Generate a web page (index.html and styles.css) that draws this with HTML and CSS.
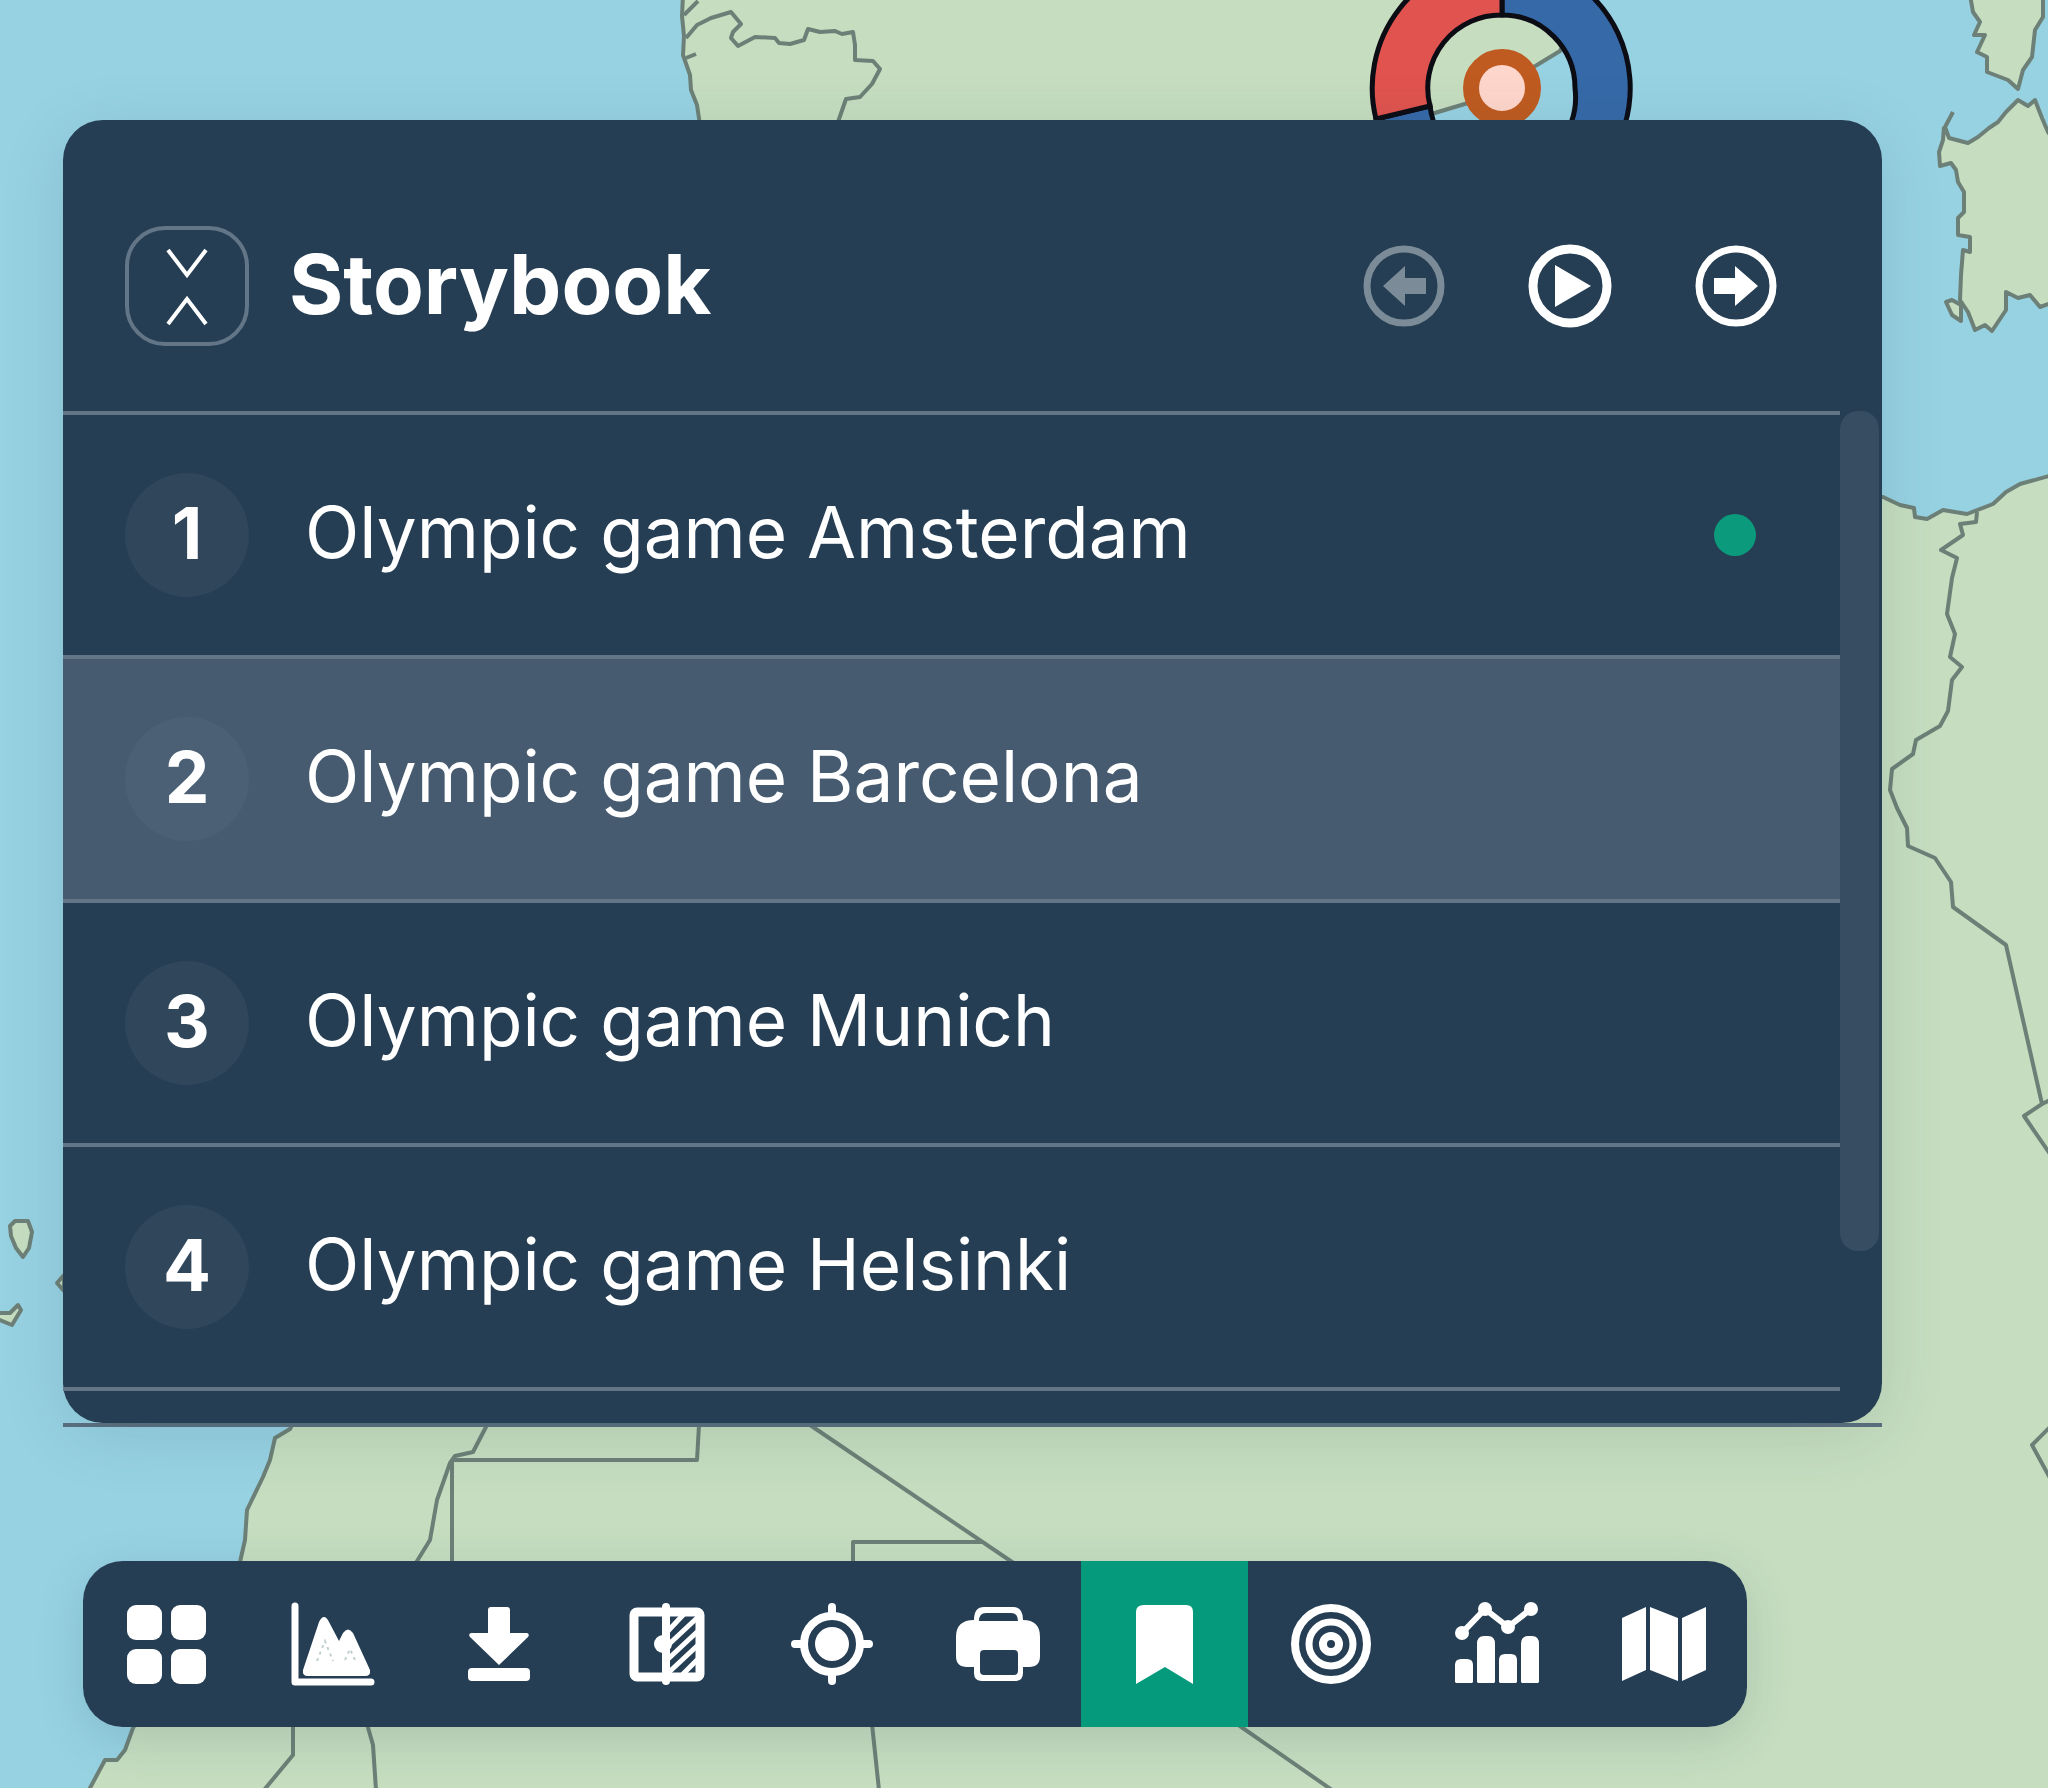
FILE: index.html
```
<!DOCTYPE html>
<html lang="en">
<head>
  <meta charset="UTF-8">
  <meta name="viewport" content="width=device-width, initial-scale=1.0">
  <title>Storybook</title>
  <link rel="stylesheet" href="styles.css">
</head>
<body>
  <!-- Map -->
  <svg class="map" viewBox="0 0 2048 1788" preserveAspectRatio="xMidYMid slice" aria-hidden="true">
    <g class="land">
      <path d="M683 -5 L682 16 L684 36 L683 55 L690 75 L691 90 L697 105 L700 125 L700 300 L1300 300 L1380 130 L1438 112 L1468 103 L1537 65 L1560 51 L1590 -5 Z"/>
      <path d="M1970 -5 L1973 12 L1980 22 L1974 35 L1985 35 L1977 52 L1987 57 L1987 72 L2008 80 L2018 89 L2023 70 L2032 57 L2035 30 L2043 17 L2043 -5 Z"/>
      <path d="M1953 112 L1945 127 L1949 138 L1968 143 L1978 137 L1989 128 L1998 122 L2006 112 L2018 100 L2028 106 L2035 100 L2042 118 L2048 132 L2060 150 L2060 300 L2040 307 L2030 295 L2018 298 L2006 292 L2006 310 L1992 331 L1985 325 L1975 330 L1968 312 L1960 300 L1961 275 L1963 250 L1970 252 L1970 237 L1958 235 L1958 218 L1964 212 L1964 192 L1958 182 L1956 170 L1951 163 L1940 166 L1939 152 L1943 140 L1944 127"/>
      <path d="M1946 302 L1952 300 L1961 305 L1961 321 L1952 315 Z"/>
      <path d="M1800 495 L1883 497 L1900 505 L1914 508 L1915 517 L1927 519 L1943 510 L1967 514 L1993 504 L2006 492 L2020 484 L2060 473 L2060 1800 L85 1800 L90 1788 L105 1760 L117 1760 L125 1750 L133 1728 L240 1562 L245 1540 L247 1510 L263 1477 L270 1460 L275 1438 L290 1429 L330 1350 Z"/>
      <path d="M10 1226 L15 1221 L28 1221 L32 1232 L29 1248 L23 1257 L16 1248 L11 1236 Z"/>
      <path d="M-5 1313 L10 1313 L18 1305 L21 1310 L12 1325 L-5 1318 Z"/>
      <path d="M64 1275 L57 1283 L64 1291 Z"/>
    </g>
    <g class="borders">
      <path d="M684 15 L698 1 M686 38 L697 25 L711 18 L731 12 L741 24 L733 32 L731 38 L738 46 L755 37 L775 38 L779 43 L790 44 L804 40 L808 29 L820 32 L835 31 L842 34 L853 32 L855 45 L855 60 L873 61 L880 69 L872 84 L860 97 L846 99 L838 122 M686 58 L696 54"/>
      <path d="M1977 512 L1976 522 L1960 524 L1963 535 L1941 550 L1957 558 L1952 578 L1947 614 L1955 634 L1950 657 L1962 667 L1952 680 L1948 711 L1940 726 L1916 740 L1913 754 L1892 769 L1890 790 L1897 808 L1907 828 L1908 846 L1935 858 L1951 882 L1953 907 L2006 945 L2042 1104 L2050 1100 M2042 1104 L2024 1116 L2050 1154"/>
      <path d="M2050 1427 L2032 1445 L2050 1478"/>
      <path d="M487 1425 L473 1452 L455 1456 L450 1463 L437 1500 L430 1540 L414 1566 M452 1460 V1566 M452 1460 H697 L699 1425"/>
      <path d="M810 1425 L1018 1566 M853 1566 V1542 H983"/>
      <path d="M293 1724 V1755 L264 1790 M367 1724 L373 1745 L376 1790 M872 1724 L879 1790 M1237 1724 L1332 1790"/>
    </g>
    <!-- Pie marker -->
    <g class="pie">
      <path fill="#3669a8" d="M1502 -41 A129 129 0 1 1 1376 119 L1430 106 A73 73 0 0 0 1575 88 A73 73 0 0 0 1502 15 Z"/>
      <path fill="#e1534e" d="M1502 -41 A129 129 0 0 0 1376 119 L1430 106 A73 73 0 0 1 1502 15 Z"/>
      <circle class="dot" cx="1502" cy="88" r="31"/>
    </g>
  </svg>

  <main>
    <section class="storybook-wrap">
      <div class="storybook">
        <header class="storybook-header">
          <button class="collapse-btn" aria-label="Collapse">
            <svg width="48" height="84" viewBox="0 0 48 84"><path d="M5 6 L24 31 L43 6 M5 80 L24 55 L43 80"/></svg>
          </button>
          <h1>Storybook</h1>
          <div class="player">
            <button aria-label="Previous" disabled>
              <svg viewBox="-42 -42 84 84"><circle r="37" stroke-width="7"/><path d="M22 -8 H1 V-20 L-21 0 L1 20 V8 H22 Z"/></svg>
            </button>
            <button aria-label="Play">
              <svg viewBox="-42 -42 84 84"><circle r="37" stroke-width="9"/><path d="M-15 -21 L21 0 L-15 21 Z"/></svg>
            </button>
            <button aria-label="Next">
              <svg viewBox="-42 -42 84 84"><circle r="37" stroke-width="7"/><path d="M-22 -8 H-1 V-20 L22 0 L-1 20 V8 H-22 Z"/></svg>
            </button>
          </div>
        </header>
        <div class="storybook-body">
          <ol class="stories">
            <li><button><span class="number">1</span><span class="name">Olympic game Amsterdam</span><span class="current"></span></button></li>
            <li class="selected"><button><span class="number">2</span><span class="name">Olympic game Barcelona</span></button></li>
            <li><button><span class="number">3</span><span class="name">Olympic game Munich</span></button></li>
            <li><button><span class="number">4</span><span class="name">Olympic game Helsinki</span></button></li>
          </ol>
          <div class="scrollbar"></div>
        </div>
      </div>
    </section>

    <!-- Toolbar -->
    <nav class="toolbar">
      <button aria-label="Dashboard">
        <svg viewBox="0 0 96 96"><rect x="9" y="9" width="35" height="35" rx="9"/><rect x="53" y="9" width="35" height="35" rx="9"/><rect x="9" y="53" width="35" height="35" rx="9"/><rect x="53" y="53" width="35" height="35" rx="9"/></svg>
      </button>
      <button aria-label="Area chart">
        <svg viewBox="0 0 96 96"><path class="line" stroke-width="7" d="M10 10 V86 H86"/><path d="M18 74 L34 26 Q39 16 44 26 L54 45 L58 37 Q63 30 68 37 L85 74 Q86 80 80 80 H23 Q17 80 18 74 Z"/><path d="M32 65 L40 45 L48 65 M60 64 L65 53 L70 64" fill="none" stroke="#c3d0d2" stroke-width="2" stroke-dasharray="3 4"/></svg>
      </button>
      <button aria-label="Download">
        <svg viewBox="0 0 96 96"><path d="M40 11 H56 Q59 11 59 14 V37 H76 Q79 38 77 41 L48 69 L19 41 Q17 38 20 37 H37 V14 Q37 11 40 11 Z"/><rect x="17" y="72" width="62" height="13" rx="4"/></svg>
      </button>
      <button aria-label="Compare">
        <svg viewBox="0 0 96 96"><rect class="line" x="17" y="16" width="66" height="65" rx="3" stroke-width="9"/><path class="line" stroke-width="8" d="M49 11 V85"/><circle cx="46" cy="48" r="9"/><path class="line" stroke-width="5" d="M50 36 L67 18 M50 50 L80 22 M50 64 L80 36 M50 78 L80 50 M66 78 L80 64"/></svg>
      </button>
      <button aria-label="My location">
        <svg viewBox="0 0 96 96"><circle class="line" cx="48" cy="48" r="28" stroke-width="8"/><circle cx="48" cy="48" r="17"/><path class="line" stroke-width="8" d="M48 11 V20 M48 76 V85 M11 48 H20 M76 48 H85"/></svg>
      </button>
      <button aria-label="Print">
        <svg viewBox="0 0 96 96"><path d="M24 24 Q24 11 34 11 H63 Q73 11 73 24 Q90 24 90 41 V60 Q90 71 79 71 H73 V77 Q73 85 65 85 H32 Q24 85 24 77 V71 H17 Q6 71 6 60 V41 Q6 24 24 24 Z"/><path class="hole" d="M29 25 Q29 17 36 17 H61 Q68 17 68 25 Z"/><rect class="hole" x="30" y="54" width="38" height="25" rx="4"/></svg>
      </button>
      <button class="active" aria-label="Bookmarks">
        <svg viewBox="0 0 96 96"><path d="M27 9 H69 Q76 9 76 16 V88 L48 71 L19 88 V16 Q19 9 27 9 Z"/></svg>
      </button>
      <button aria-label="Buffer">
        <svg viewBox="0 0 96 96"><g class="line"><circle cx="48" cy="48" r="36" stroke-width="8"/><circle cx="48" cy="48" r="22" stroke-width="7"/><circle cx="48" cy="48" r="8" stroke-width="8"/></g></svg>
      </button>
      <button aria-label="Statistics">
        <svg viewBox="0 0 96 96"><path class="line" stroke-width="6" d="M13 37 L36 13 L59 31 L82 13"/><circle cx="13" cy="37" r="7"/><circle cx="36" cy="13" r="7"/><circle cx="59" cy="31" r="7"/><circle cx="82" cy="13" r="7"/><path d="M6 86 V69 Q6 63 12 63 H18 Q24 63 24 69 V86 L23 87 H7 Z M28 86 V48 Q28 40 35 40 H39 Q46 40 46 48 V86 L45 87 H29 Z M50 86 V64 Q50 58 56 58 H62 Q68 58 68 64 V86 L67 87 H51 Z M72 86 V48 Q72 40 79 40 H83 Q90 40 90 48 V86 L89 87 H73 Z"/></svg>
      </button>
      <button aria-label="Maps">
        <svg viewBox="0 0 96 96"><path d="M6 22 L30 11 V74 L6 85 Z M34 11 L62 22 V85 L34 74 Z M66 22 L90 11 V74 L66 85 Z"/></svg>
      </button>
    </nav>
  </main>
</body>
</html>
```

FILE: styles.css
```
* {
  box-sizing: border-box;
}
body {
  font-family: Inter, "Liberation Sans", sans-serif;
  background-color: #97d2e3;
  color: white;
  margin: 0;
  min-height: 100vh;
  position: relative;
  overflow: hidden;
}
button {
  background: none;
  border: none;
  padding: 0;
  font: inherit;
  color: inherit;
  cursor: pointer;
}

/* Map */
.map {
  position: absolute;
  top: 0;
  left: 0;
  width: 100%;
  height: 100%;
}
.land path {
  fill: #c6ddc0;
  stroke: #6d8077;
  stroke-width: 4;
  stroke-linejoin: round;
}
.borders path {
  fill: none;
  stroke: #6d8077;
  stroke-width: 4;
  stroke-linejoin: round;
}
.pie path {
  stroke: #0c0c14;
  stroke-width: 5;
}
.pie .dot {
  fill: #ffd6cb;
  stroke: #bf5b20;
  stroke-width: 16;
}

main {
  position: relative;
  padding: 120px 166px 60px 63px;
}

/* Storybook panel */
.storybook-wrap {
  border-bottom: 4px solid #5b6f7f;
}
.storybook {
  background: #253e54;
  border-radius: 40px;
  padding-bottom: 32px;
  box-shadow: 0 12px 64px rgba(40, 70, 80, 0.14);
}
.storybook-header {
  display: flex;
  align-items: center;
  gap: 40px;
  padding: 106px 104px 65px 62px;
}
.collapse-btn {
  display: flex;
  align-items: center;
  justify-content: center;
  width: 124px;
  height: 120px;
  border: 4px solid #637687;
  border-radius: 40px;
}
.collapse-btn svg {
  fill: none;
  stroke: white;
  stroke-width: 4;
}
h1 {
  flex: 1;
  margin: 0;
  padding-bottom: 4px;
  font-size: 83px;
  font-weight: 700;
  line-height: 96px;
}
.player {
  display: flex;
  gap: 82px;
}
.player button,
.player svg {
  display: block;
  width: 84px;
  height: 84px;
}
.player svg {
  fill: white;
  stroke: none;
}
.player circle {
  fill: none;
  stroke: white;
}
.player button:disabled {
  opacity: 0.4;
}
.storybook-body {
  display: flex;
}
.stories {
  flex: 1;
  margin: 0;
  padding: 0;
  list-style: none;
  border-top: 4px solid #637687;
}
.stories li {
  border-bottom: 4px solid #637687;
}
.stories button {
  display: flex;
  align-items: center;
  gap: 56px;
  width: 100%;
  height: 240px;
  padding: 0 84px 0 62px;
  font-size: 71px;
  text-align: left;
}
.stories .selected {
  background: #475b70;
}
.number {
  width: 124px;
  padding-bottom: 4px;
  line-height: 120px;
  border-radius: 50%;
  background: #2f465b;
  font-weight: 700;
  text-align: center;
}
.selected .number {
  background: #4c6075;
}
.name {
  padding-bottom: 6px;
}
.current {
  width: 42px;
  height: 42px;
  margin-left: auto;
  border-radius: 50%;
  background: #0b9b7c;
}
.scrollbar {
  width: 39px;
  height: 840px;
  margin-right: 3px;
  border-radius: 18px;
  background: #374d62;
}

/* Toolbar */
.toolbar {
  display: grid;
  grid-template-columns: repeat(10, 1fr);
  margin: 134px 135px 0 20px;
  border-radius: 40px;
  background: #253e54;
  overflow: hidden;
  box-shadow: 0 12px 48px rgba(40, 70, 80, 0.16);
}
.toolbar button {
  display: flex;
  align-items: center;
  justify-content: center;
  height: 166px;
}
.toolbar .active {
  background: #059a7c;
}
.toolbar svg {
  width: 96px;
  height: 96px;
  fill: white;
}
.toolbar .line {
  fill: none;
  stroke: white;
  stroke-linecap: round;
  stroke-linejoin: round;
}
.toolbar .hole {
  fill: #253e54;
}
```
